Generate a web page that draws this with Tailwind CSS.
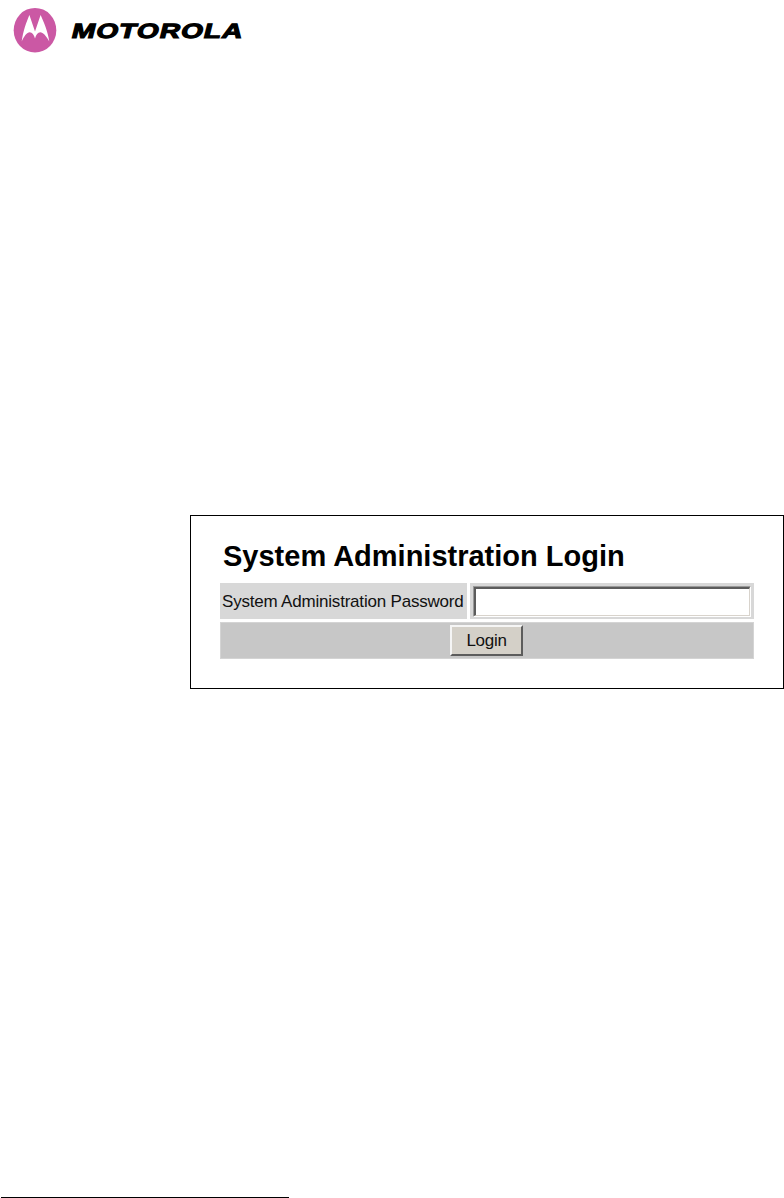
<!DOCTYPE html>
<html lang="en">
<head>
<meta charset="utf-8">
<title>System Administration Login</title>
<script src="https://cdn.jsdelivr.net/npm/@tailwindcss/browser@4"></script>
</head>
<body class="bg-white">
<div class="flex flex-col w-[784px] h-[1198px] overflow-hidden bg-white text-black font-['Liberation_Sans',Arial,sans-serif]">
  <header class="h-[515px] shrink-0">
    <svg class="block" width="260" height="64" viewBox="0 0 260 64" role="img" aria-label="Motorola">
      <ellipse cx="35" cy="30.2" rx="21.3" ry="22.3" fill="#cb58a4"/>
      <path fill="#fff" d="M29.4 15 L35 31.5 L40.6 15 C43.8 22 47.8 31.5 49.3 41.4 C46.3 36 43 32.2 40.3 32.2 C37.8 32.2 36 34.5 35 38.5 C34 34.5 32.2 32.2 29.7 32.2 C27 32.2 24.2 36 21.7 41.4 C23 31.5 26.4 22 29.4 15Z"/>
      <g transform="translate(70 38) skewX(-14)">
        <text x="0.5" y="-0.3" font-size="20.6" font-weight="700" textLength="171.5" lengthAdjust="spacingAndGlyphs" letter-spacing="0.7" stroke="#000" stroke-width="1.1">MOTOROLA</text>
      </g>
    </svg>
  </header>
  <main class="ml-[190px] w-[594px] h-[174px] shrink-0 border border-black pl-[29px] pt-[22px]">
    <h1 class="h-[45px] pl-[3px] text-[29px] leading-[36px] font-bold whitespace-nowrap"><span>System Administration Login</span></h1>
    <form class="flex flex-col gap-[3px] w-[534px]" onsubmit="return false">
      <div class="flex gap-[3px]">
        <label for="pw" class="w-[247px] h-[36px] bg-[#d8d8d8] pl-[2px] pt-px text-[17px] leading-[36px] tracking-[-0.2px] whitespace-nowrap text-[#111]"><span>System Administration Password</span></label>
        <div class="w-[284px] h-[36px] bg-[#d8d8d8] pl-[3px] pt-[3px]">
          <div class="w-[278px] h-[31px] border border-t-[#999] border-l-[#999] border-r-white border-b-white">
            <input id="pw" type="password" class="block w-full h-full bg-white outline-none border-t-2 border-l-2 border-r border-b border-t-[#5c5c5c] border-l-[#5c5c5c] border-r-[#d8d3cc] border-b-[#d8d3cc]">
          </div>
        </div>
      </div>
      <div class="h-[37px] bg-[#c7c7c7] border border-[#d4d4d4] pl-[229px] pt-[2px]">
        <button class="block w-[73px] h-[31px] bg-[#d4d0c8] border-2 border-t-[#f5f5f5] border-l-[#f5f5f5] border-r-[#5c5c5c] border-b-[#5c5c5c] text-[17px] leading-[27px] tracking-[-0.3px] text-[#111]"><span>Login</span></button>
      </div>
    </form>
  </main>
  <footer class="mt-auto ml-px w-[288px] h-px bg-black"></footer>
</div>
</body>
</html>
